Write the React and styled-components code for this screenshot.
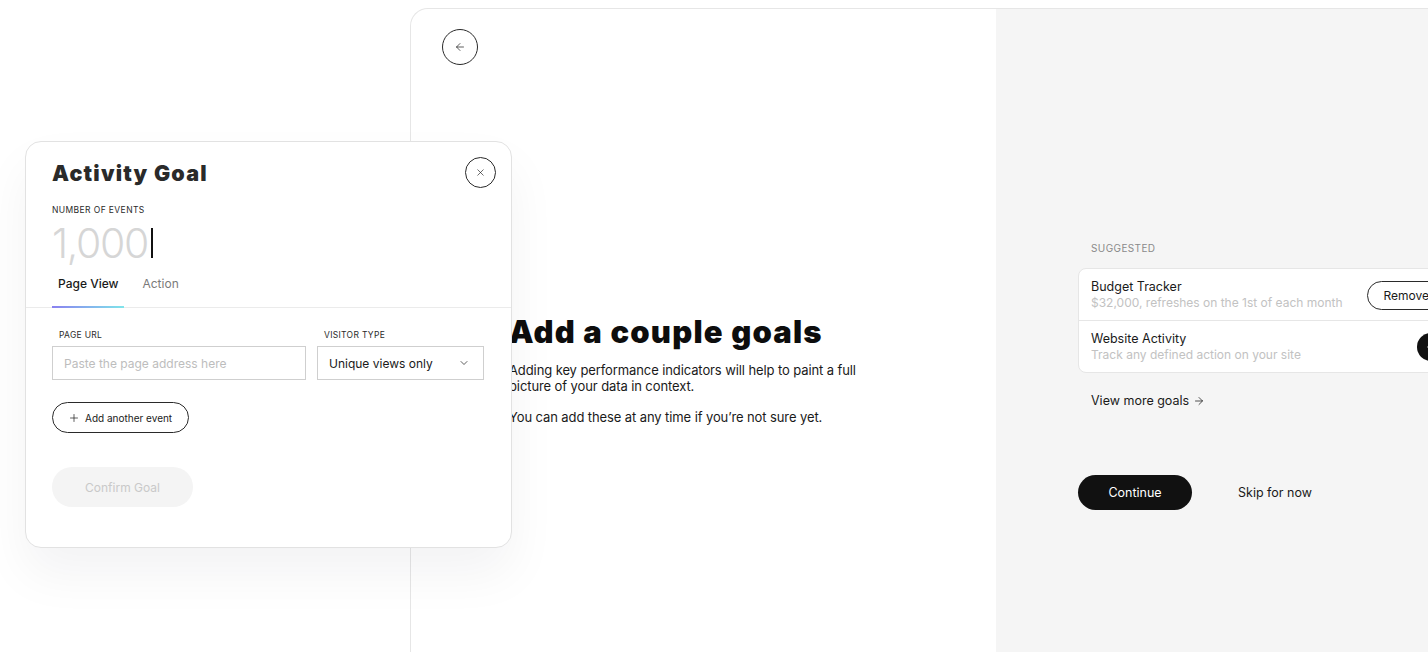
import React from "react";
import styled, { createGlobalStyle } from "styled-components";
import { ArrowLeft, ArrowRight, ChevronDown, Plus, X } from "lucide-react";

const GlobalStyle = createGlobalStyle`
  * { box-sizing: border-box; }
  body {
    margin: 0;
    background: #fff;
    font-family: Inter, "Noto Sans", sans-serif;
    color: #1a1a1a;
  }
`;

const Page = styled.div`
  position: relative;
  height: 652px;
  overflow: hidden;
  padding: 8px 0 0 410px;
`;

const Window = styled.div`
  display: grid;
  grid-template-columns: 585px 520px;
  width: 1105px;
  height: 700px;
  border-top: 1px solid #e6e6e6;
  border-left: 1px solid #e6e6e6;
  border-top-left-radius: 18px;
  background: #fff;
  overflow: hidden;
`;

const MainPane = styled.section`
  display: flex;
  flex-direction: column;
  padding: 20px 0 0 31px;
`;

const RoundButton = styled.button`
  display: flex;
  align-items: center;
  justify-content: center;
  width: ${(p) => p.size}px;
  height: ${(p) => p.size}px;
  padding: 0;
  border: 1px solid #2a2a2a;
  border-radius: 50%;
  background: #fff;
  color: #1a1a1a;
  flex-shrink: 0;
`;

const Intro = styled.div`
  margin: 249px 0 0 67px;
  width: 360px;
`;

const Heading = styled.h1`
  margin: 0 0 12px;
  font-family: Inter, "Liberation Sans", sans-serif;
  font-weight: 900;
  font-size: 31px;
  line-height: 36px;
  letter-spacing: 1.2px;
  color: #0d0d0d;
  white-space: nowrap;
`;

const Para = styled.p`
  margin: 0 0 15px;
  font-size: 13px;
  line-height: 16px;
  letter-spacing: -0.1px;
  color: #1a1a1a;
`;

const SidePane = styled.section`
  background: #f5f5f5;
  padding: 233px 0 0 82px;
  display: flex;
  flex-direction: column;
  align-items: flex-start;
`;

const Eyebrow = styled.div`
  padding-left: ${(p) => p.indent || 0}px;
  font-size: ${(p) => p.size || 10}px;
  line-height: 12px;
  letter-spacing: 0.4px;
  text-transform: uppercase;
  color: ${(p) => p.color || "#8a8a8a"};
`;

const Card = styled.div`
  width: 380px;
  margin-top: 14px;
  background: #fff;
  border: 1px solid #e6e6e6;
  border-radius: 8px;
`;

const GoalRow = styled.div`
  display: flex;
  align-items: center;
  justify-content: space-between;
  padding: 10px 12px 9px;
  & + & {
    border-top: 1px solid #e6e6e6;
  }
`;

const GoalTitle = styled.div`
  font-size: 12.5px;
  line-height: 16px;
  color: #1a1a1a;
`;

const GoalSub = styled.div`
  font-size: 12px;
  line-height: 16px;
  color: #c2c2c2;
`;

const OutlinePill = styled.button`
  height: 29px;
  padding: 0 15px;
  border: 1px solid #2a2a2a;
  border-radius: 15px;
  background: #fff;
  font-family: inherit;
  font-size: 12px;
  color: #1a1a1a;
`;

const DarkCircle = styled.button`
  display: flex;
  align-items: center;
  justify-content: center;
  width: 28px;
  height: 28px;
  padding: 0;
  border: none;
  border-radius: 50%;
  background: #111;
  color: #fff;
`;

const TextLink = styled.a`
  display: flex;
  align-items: center;
  gap: 4px;
  margin-top: 20px;
  padding-left: 13px;
  font-size: 12.5px;
  line-height: 16px;
  color: #1a1a1a;
`;

const Actions = styled.div`
  display: flex;
  align-items: center;
  gap: 46px;
  margin-top: 66px;
`;

const PrimaryButton = styled.button`
  width: 114px;
  height: 35px;
  border: none;
  border-radius: 18px;
  background: #111;
  color: #fff;
  font-family: inherit;
  font-size: 12.5px;
`;

const GhostButton = styled.button`
  padding: 0;
  border: none;
  background: none;
  font-family: inherit;
  font-size: 12.5px;
  color: #1a1a1a;
`;

/* modal */

const Modal = styled.div`
  position: absolute;
  left: 25px;
  top: 141px;
  width: 487px;
  height: 407px;
  background: #fff;
  border: 1px solid #e2e2e2;
  border-radius: 16px;
  box-shadow: 0 26px 50px rgba(20, 20, 40, 0.05);
`;

const ModalHeader = styled.div`
  display: flex;
  justify-content: space-between;
  align-items: flex-start;
  padding: 15px 15px 0 26px;
`;

const ModalTitle = styled.h2`
  margin: 3px 0 0;
  font-family: Inter, "Liberation Sans", sans-serif;
  font-weight: 900;
  font-size: 21.5px;
  line-height: 26px;
  letter-spacing: 1.2px;
  color: #2a2a2a;
`;

const Field = styled.div`
  padding: 0 26px;
  margin-top: ${(p) => p.mt || 0}px;
`;

const BigNumber = styled.div`
  display: flex;
  align-items: center;
  margin-top: 5px;
  font-size: 41px;
  line-height: 44px;
  font-weight: 300;
  color: #d6d6d6;
  letter-spacing: -1.3px;
`;

const Caret = styled.span`
  display: inline-block;
  width: 1.5px;
  height: 30px;
  margin-left: 3px;
  background: #111;
`;

const Tabs = styled.div`
  display: flex;
  gap: 12px;
  margin-top: 11px;
  padding: 0 26px;
  border-bottom: 1px solid #ebebeb;
`;

const Tab = styled.div`
  padding: 0 6px 14px;
  font-size: 12px;
  line-height: 16px;
  font-weight: ${(p) => (p.active ? 500 : 400)};
  color: ${(p) => (p.active ? "#1a1a1a" : "#7a7a7a")};
  border-bottom: 2px solid transparent;
  border-image: ${(p) =>
    p.active ? "linear-gradient(90deg, #8a7ff0, #7fe6ea) 1" : "none"};
  margin-bottom: -1px;
`;

const FormGrid = styled.div`
  display: grid;
  grid-template-columns: 254px 167px;
  gap: 11px;
  margin-top: 21px;
  padding: 0 26px;
`;

const FieldLabel = styled.label`
  display: block;
  padding-left: 7px;
  margin-bottom: 5px;
  font-size: 8.5px;
  line-height: 12px;
  letter-spacing: 0.3px;
  color: #2a2a2a;
`;

const TextInput = styled.input`
  width: 100%;
  height: 34px;
  padding: 0 11px;
  border: 1px solid #cfcfcf;
  font-family: inherit;
  font-size: 12px;
  color: #1a1a1a;
  outline: none;
  &::placeholder {
    color: #bdbdbd;
  }
`;

const SelectBox = styled.div`
  display: flex;
  align-items: center;
  justify-content: space-between;
  height: 34px;
  padding: 0 13px 0 11px;
  border: 1px solid #cfcfcf;
  font-size: 12px;
  color: #1a1a1a;
`;

const AddEvent = styled.button`
  display: flex;
  align-items: center;
  gap: 5px;
  height: 31px;
  margin: 22px 0 0 26px;
  padding: 0 16px 0 15px;
  border: 1px solid #2a2a2a;
  border-radius: 16px;
  background: #fff;
  font-family: inherit;
  font-size: 10px;
  color: #1a1a1a;
`;

const ConfirmButton = styled.button`
  width: 141px;
  height: 40px;
  margin: 34px 0 0 26px;
  border: none;
  border-radius: 20px;
  background: #f4f4f4;
  color: #c9c9c9;
  font-family: inherit;
  font-size: 12px;
`;

export default function App() {
  return (
    <>
      <GlobalStyle />
      <Page>
        <Window>
          <MainPane>
            <RoundButton size={36} aria-label="Back">
              <ArrowLeft size={12} strokeWidth={1.4} />
            </RoundButton>
            <Intro>
              <Heading>Add a couple goals</Heading>
              <Para>
                Adding key performance indicators will help to paint a full
                picture of your data in context.
              </Para>
              <Para>You can add these at any time if you’re not sure yet.</Para>
            </Intro>
          </MainPane>

          <SidePane>
            <Eyebrow indent={13}>Suggested</Eyebrow>
            <Card>
              <GoalRow>
                <div>
                  <GoalTitle>Budget Tracker</GoalTitle>
                  <GoalSub>$32,000, refreshes on the 1st of each month</GoalSub>
                </div>
                <OutlinePill>Remove</OutlinePill>
              </GoalRow>
              <GoalRow>
                <div>
                  <GoalTitle>Website Activity</GoalTitle>
                  <GoalSub>Track any defined action on your site</GoalSub>
                </div>
                <DarkCircle aria-label="Add">
                  <Plus size={12} strokeWidth={1.6} />
                </DarkCircle>
              </GoalRow>
            </Card>
            <TextLink>
              View more goals <ArrowRight size={12} strokeWidth={1.5} />
            </TextLink>
            <Actions>
              <PrimaryButton>Continue</PrimaryButton>
              <GhostButton>Skip for now</GhostButton>
            </Actions>
          </SidePane>
        </Window>

        <Modal>
          <ModalHeader>
            <ModalTitle>Activity Goal</ModalTitle>
            <RoundButton size={31} aria-label="Close">
              <X size={11} strokeWidth={1.4} />
            </RoundButton>
          </ModalHeader>
          <Field mt={16}>
            <Eyebrow size={8.5} color="#2a2a2a">
              Number of events
            </Eyebrow>
            <BigNumber>
              1,000
              <Caret />
            </BigNumber>
          </Field>
          <Tabs>
            <Tab active>Page View</Tab>
            <Tab>Action</Tab>
          </Tabs>
          <FormGrid>
            <div>
              <FieldLabel>PAGE URL</FieldLabel>
              <TextInput placeholder="Paste the page address here" />
            </div>
            <div>
              <FieldLabel>VISITOR TYPE</FieldLabel>
              <SelectBox>
                Unique views only
                <ChevronDown size={12} strokeWidth={1.4} />
              </SelectBox>
            </div>
          </FormGrid>
          <AddEvent>
            <Plus size={12} strokeWidth={1.4} />
            Add another event
          </AddEvent>
          <ConfirmButton>Confirm Goal</ConfirmButton>
        </Modal>
      </Page>
    </>
  );
}
